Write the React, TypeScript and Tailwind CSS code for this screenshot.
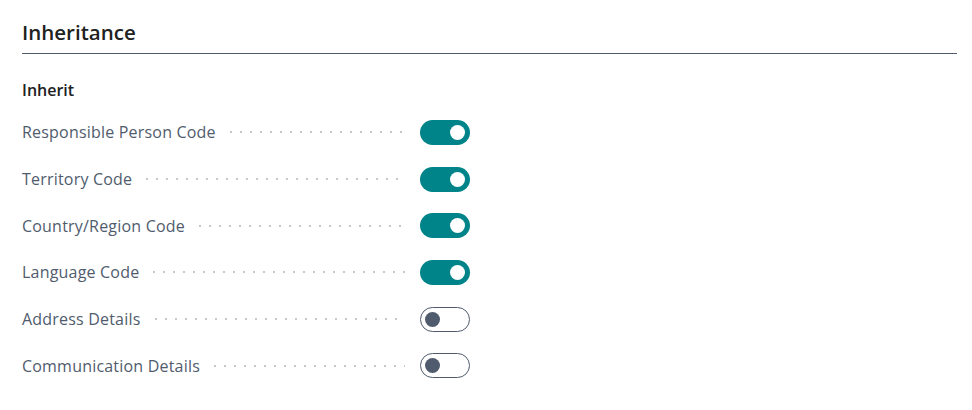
import React from "react";

const rows: { label: string; on: boolean }[] = [
  { label: "Responsible Person Code", on: true },
  { label: "Territory Code", on: true },
  { label: "Country/Region Code", on: true },
  { label: "Language Code", on: true },
  { label: "Address Details", on: false },
  { label: "Communication Details", on: false },
];

function Toggle({ on }: { on: boolean }) {
  return on ? (
    <div className="flex h-[25px] w-[50px] items-center justify-end rounded-full bg-[#008489] pr-[5px]">
      <div className="h-[15px] w-[15px] rounded-full bg-white" />
    </div>
  ) : (
    <div className="flex h-[25px] w-[50px] items-center justify-start rounded-full border border-[#505c6d] bg-white pl-[4px]">
      <div className="h-[15px] w-[15px] rounded-full bg-[#505c6d]" />
    </div>
  );
}

export default function App() {
  return (
    <div
      className="min-h-[410px] w-[972px] bg-white pl-[22px] pr-[15px] pt-[18px]"
      style={{ fontFamily: '"Open Sans", "Noto Sans", sans-serif' }}
    >
      <div className="border-b border-[#505c6d] pb-[6px]">
        <h2 className="text-[20.5px] font-semibold leading-[29px] text-[#212121]">Inheritance</h2>
      </div>
      <div className="pt-[26px] text-[16px] font-semibold leading-[20px] text-[#212121]">Inherit</div>
      <div className="mt-[9px] flex flex-col">
        {rows.map((r) => (
          <div key={r.label} className="flex h-[46.7px] items-center">
            <div className="flex w-[383px] items-center">
              <span className="whitespace-nowrap text-[16px] leading-[20px] tracking-[0.2px] text-[#505c6d]">{r.label}</span>
              <div className="ml-[10px] h-[4px] flex-1 bg-[radial-gradient(circle,#c8c8c8_1px,transparent_1.3px)] bg-[length:10px_4px] bg-repeat-x" />
            </div>
            <div className="ml-[15px]">
              <Toggle on={r.on} />
            </div>
          </div>
        ))}
      </div>
    </div>
  );
}
